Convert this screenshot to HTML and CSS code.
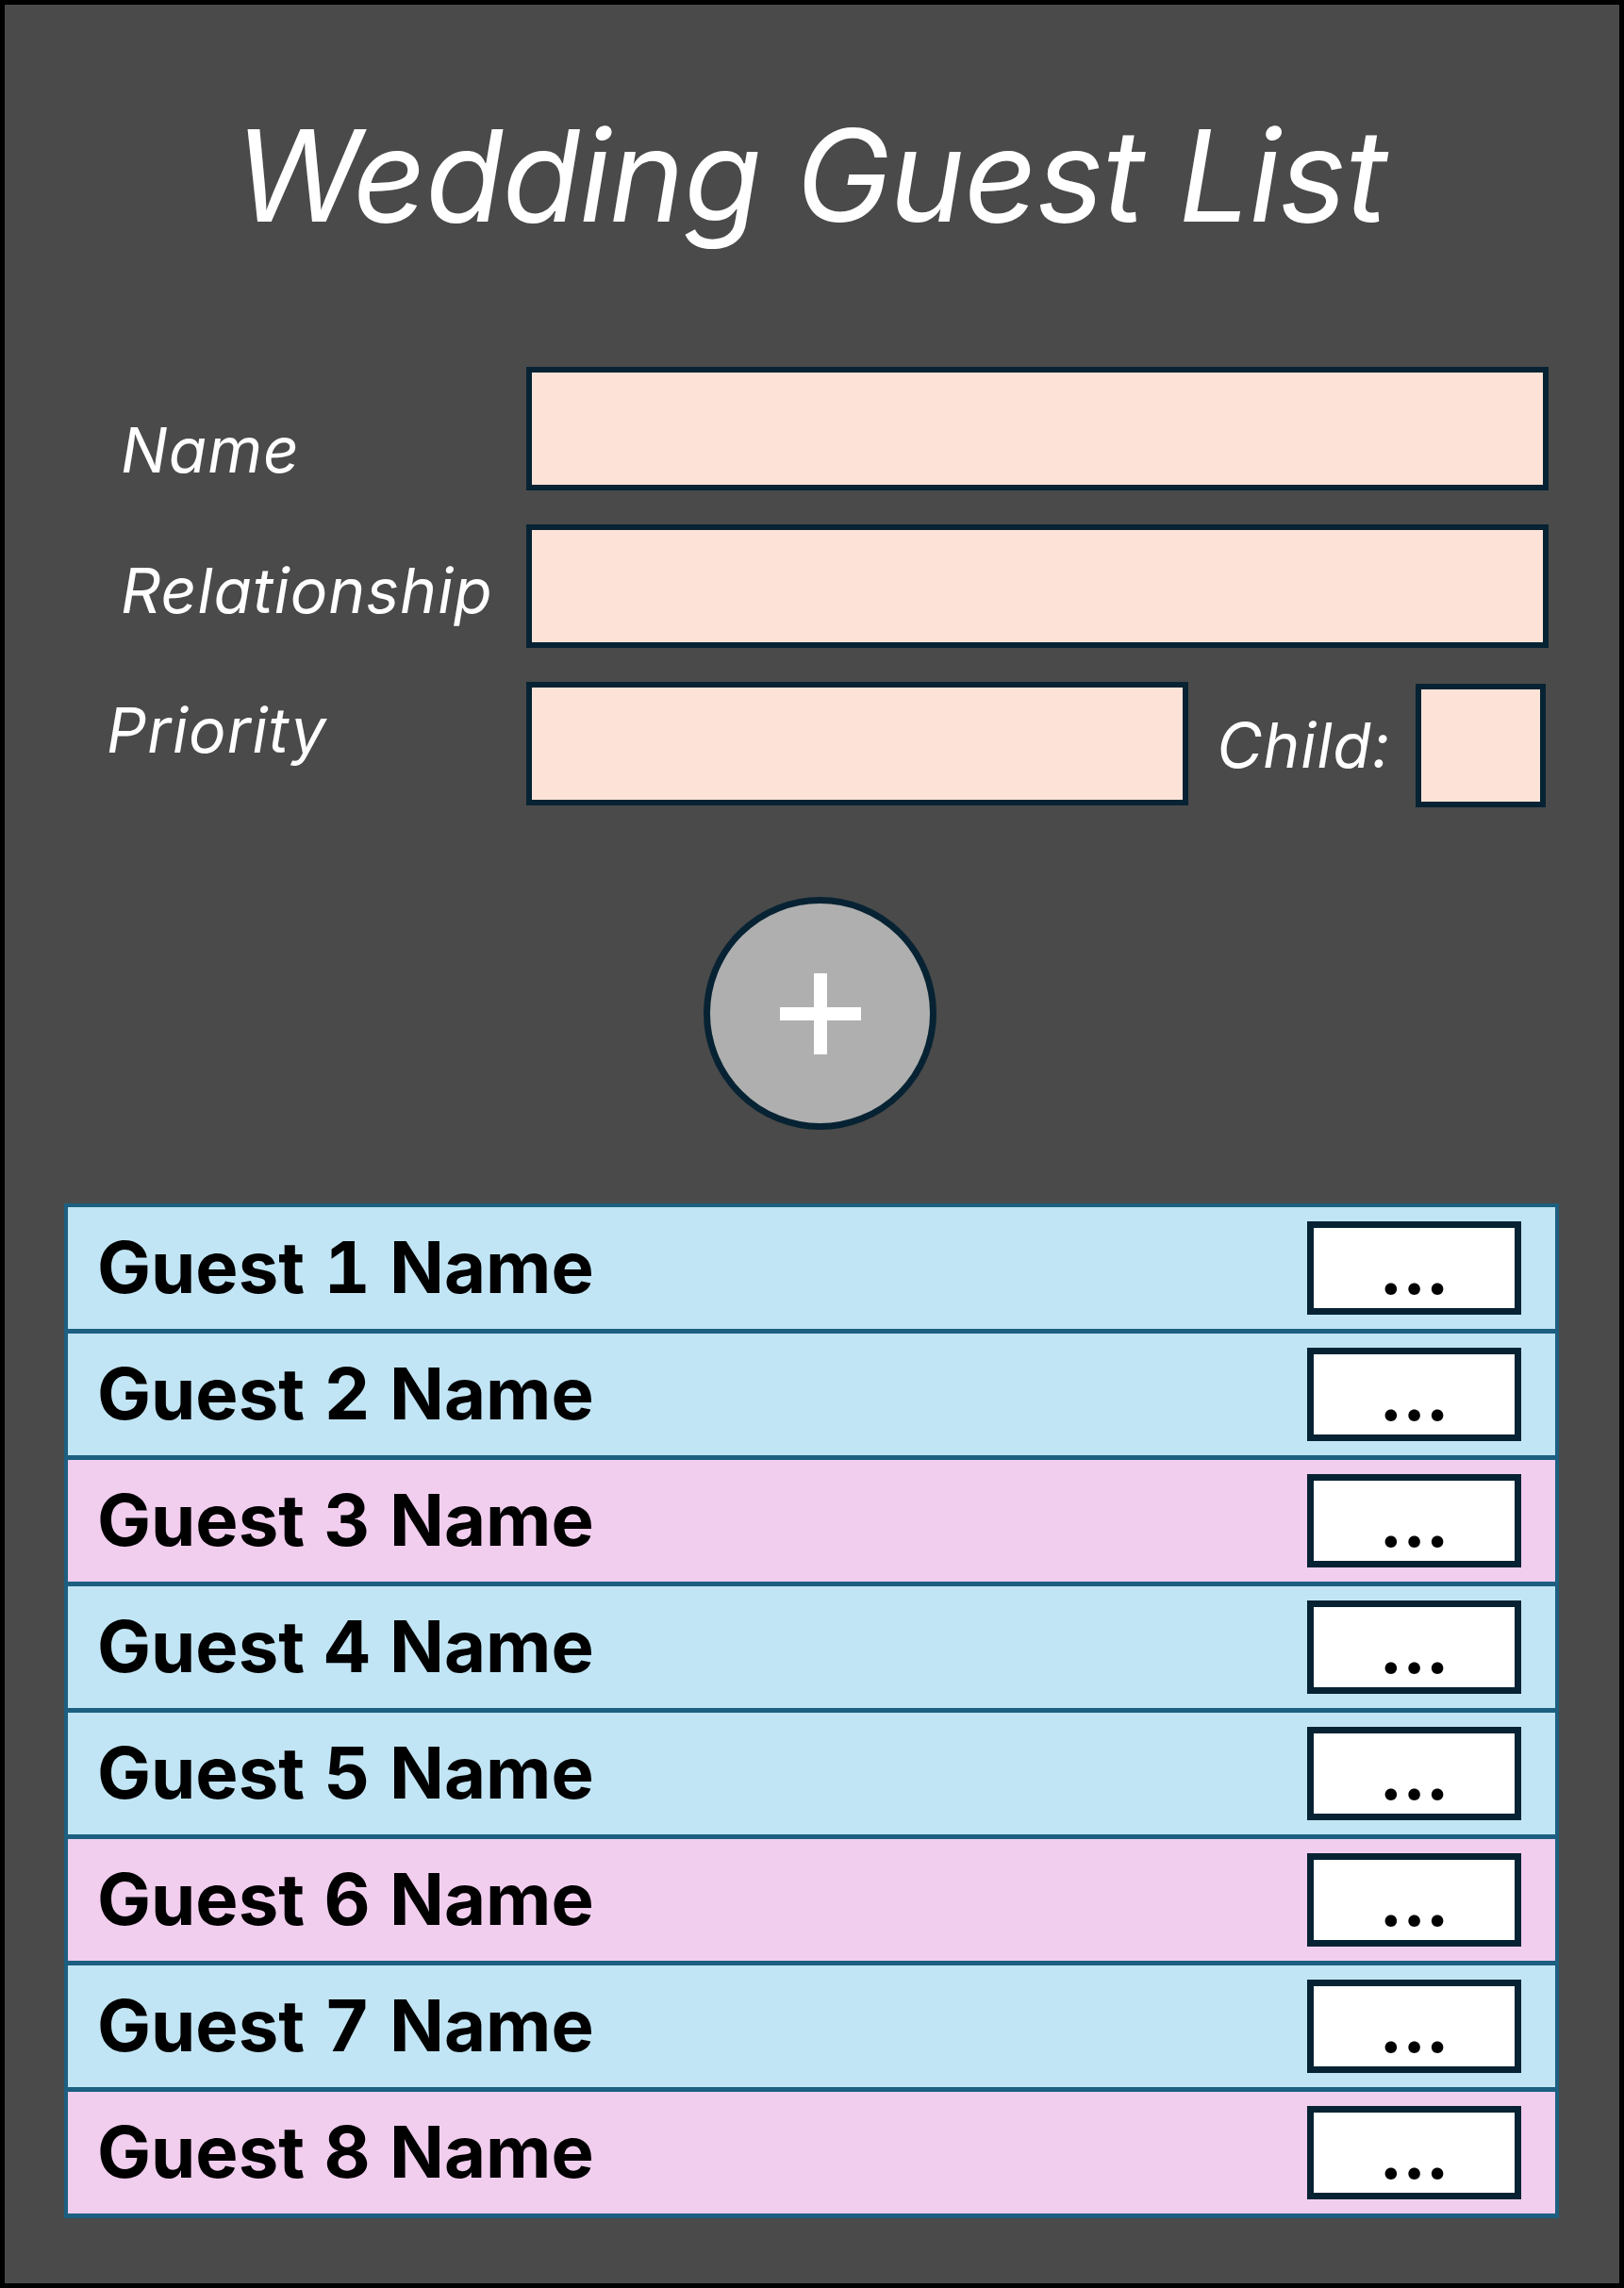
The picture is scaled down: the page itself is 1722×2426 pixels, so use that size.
FILE: index.html
```html
<!DOCTYPE html>
<html lang="en">
<head>
    <meta charset="UTF-8">
    <meta name="viewport" content="width=device-width, initial-scale=1.0">
    <title>Wedding Guest List</title>
    <link rel="stylesheet" href="styles.css">
</head>
<body>
<div class="page">
    <h1 class="title">Wedding Guest List</h1>

    <form class="guest-form">
        <label class="label label-name" for="name">Name</label>
        <input class="field" type="text" id="name">

        <label class="label label-rel" for="relationship">Relationship</label>
        <input class="field" type="text" id="relationship">

        <label class="label label-prio" for="priority">Priority</label>
        <div class="prio-row">
            <input class="field field-prio" type="text" id="priority">
            <label class="label label-child" for="child">Child:</label>
            <input class="field field-child" type="text" id="child">
        </div>
    </form>

    <div class="add-wrap">
        <button type="button" class="add-btn" aria-label="Add guest">
            <svg width="86" height="86" viewBox="0 0 86 86">
                <rect x="0" y="36" width="86" height="14" fill="#fff"/>
                <rect x="36" y="0" width="14" height="86" fill="#fff"/>
            </svg>
        </button>
    </div>

    <div class="guest-list">
        <div class="guest blue"><span class="guest-name">Guest 1 Name</span><button type="button" class="more">...</button></div>
        <div class="guest blue"><span class="guest-name">Guest 2 Name</span><button type="button" class="more">...</button></div>
        <div class="guest pink"><span class="guest-name">Guest 3 Name</span><button type="button" class="more">...</button></div>
        <div class="guest blue"><span class="guest-name">Guest 4 Name</span><button type="button" class="more">...</button></div>
        <div class="guest blue"><span class="guest-name">Guest 5 Name</span><button type="button" class="more">...</button></div>
        <div class="guest pink"><span class="guest-name">Guest 6 Name</span><button type="button" class="more">...</button></div>
        <div class="guest blue"><span class="guest-name">Guest 7 Name</span><button type="button" class="more">...</button></div>
        <div class="guest pink"><span class="guest-name">Guest 8 Name</span><button type="button" class="more">...</button></div>
    </div>
</div>
</body>
</html>
```

FILE: styles.css
```css
body {
    margin: 0;
    font-family: Inter, "Open Sans", sans-serif;
}
.page {
    width: 1722px;
    height: 2426px;
    box-sizing: border-box;
    border: 5px solid #000;
    background: #4a4a4a;
    display: flex;
    flex-direction: column;
}
.title {
    margin: 114px 0 0 0;
    font-size: 135px;
    line-height: 1;
    font-weight: 400;
    font-style: italic;
    letter-spacing: -1px;
    color: #fff;
    text-align: center;
    padding-right: 3px;
}
.guest-form {
    display: grid;
    grid-template-columns: 430px 1084px;
    grid-auto-rows: 131px;
    row-gap: 36px;
    margin-top: 135px;
    padding-left: 123px;
}
.label {
    color: #fff;
    font-size: 66px;
    line-height: 1;
    font-style: italic;
    letter-spacing: 1px;
    align-self: start;
}
.label-name { margin-top: 55px; }
.label-rel { margin-top: 37px; }
.label-prio { margin-top: 18px; margin-left: -15px; }
.field {
    box-sizing: border-box;
    height: 131px;
    margin: 0;
    border: 6px solid #072333;
    background: #fde3d7;
    border-radius: 0;
    outline: none;
}
.prio-row {
    display: flex;
    align-items: center;
}
.field-prio { width: 702px; }
.label-child {
    flex: 1;
    align-self: center;
    text-align: center;
    margin-top: 2px;
    padding-left: 4px;
}
.field-child {
    width: 138px;
    margin-right: 3px;
    margin-top: 4px;
}
.add-wrap {
    display: flex;
    justify-content: center;
    margin-top: 97px;
}
.add-btn {
    width: 247px;
    height: 247px;
    margin-left: 17px;
    box-sizing: border-box;
    border: 7px solid #072333;
    border-radius: 50%;
    background: #afafaf;
    display: flex;
    align-items: center;
    justify-content: center;
    padding: 0;
    cursor: pointer;
}
.guest-list {
    margin: 78px 0 0 63px;
    width: 1585px;
    box-sizing: border-box;
    border: 4px solid #1c5f80;
    border-bottom-width: 5px;
}
.guest {
    height: 129px;
    display: flex;
    align-items: center;
    justify-content: space-between;
    padding: 0 36px 0 31px;
}
.guest + .guest {
    border-top: 5px solid #1c5f80;
}
.blue { background: #c1e5f4; }
.pink { background: #f1cdee; }
.guest-name {
    font-size: 76px;
    line-height: 1;
    font-weight: 700;
    font-feature-settings: "tnum";
    color: #000;
    margin-top: -3px;
}
.more {
    width: 227px;
    height: 99px;
    box-sizing: border-box;
    border: 7px solid #072333;
    background: #fff;
    font-family: Inter, "Open Sans", sans-serif;
    font-size: 74px;
    line-height: 1;
    font-weight: 700;
    color: #000;
    padding: 0;
    cursor: pointer;
}
```
